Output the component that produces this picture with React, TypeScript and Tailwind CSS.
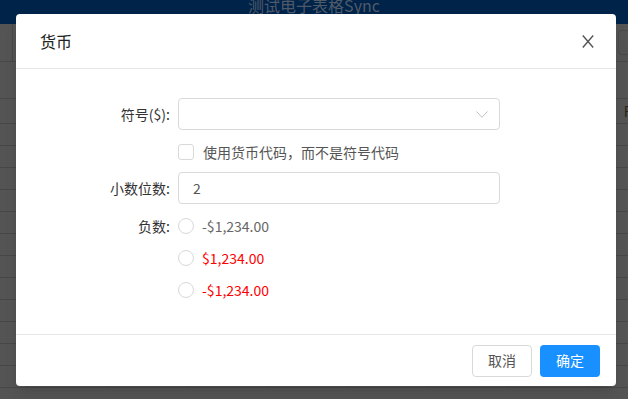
const rows = Array.from({ length: 13 });
const cols = ["", "", "", "", "", "", "", "F"];

function Sheet() {
  return (
    <div className="flex flex-col w-full h-full bg-[#545454]">
      <div className="h-[24px] bg-[#00234a] flex justify-center overflow-hidden shrink-0">
        <span className="text-[16px] leading-[16px] -mt-[3px] text-[#4f5a68]">测试电子表格Sync</span>
      </div>
      <div className="h-[38px] flex border-b border-[#484848] shrink-0">
        <div className="w-[13px] border-r border-[#484848]" />
        <div className="flex-1" />
        <div className="w-[10px] my-[6px] rounded-l-[4px] border border-r-0 border-[#4a4a4a]" />
      </div>
      <div className="h-[37px] border-b border-[#484848] shrink-0" />
      <div className="flex flex-col">
        {rows.map((_, i) => (
          <div key={i} className={`flex border-b border-[#474747] ${i === 0 ? "h-[25px]" : "h-[22px]"}`}>
            <div className="w-[28px] shrink-0 border-r border-[#474747]" />
            {cols.map((c, j) => (
              <div
                key={j}
                className="w-[80px] shrink-0 border-r border-[#474747] flex items-center justify-center text-[14px] text-[#2a2418]"
              >
                {i === 0 ? c : ""}
              </div>
            ))}
          </div>
        ))}
      </div>
    </div>
  );
}

function Radio({ text, color }: { text: string; color: string }) {
  return (
    <div className="flex items-center h-[16px]">
      <span className="w-[16px] h-[16px] rounded-full border border-[#d9d9d9] bg-white" />
      <span className={`ml-[8px] text-[14px] ${color}`}>{text}</span>
    </div>
  );
}

export default function App() {
  return (
    <div className="relative w-[628px] h-[399px] overflow-hidden font-['Noto_Sans_CJK_SC','Noto_Sans',sans-serif]">
      <Sheet />
      <div className="absolute left-[16px] top-[14px] w-[600px] h-[372px] bg-white rounded-[4px] flex flex-col shadow-lg">
        <div className="h-[55px] flex items-center justify-between pl-[24px] pr-[22px] border-b border-[#e8e8e8] shrink-0">
          <span className="text-[16px] text-[#222]">货币</span>
          <svg width="12" height="13" viewBox="0 0 12 13" className="mt-[1px]">
            <path d="M0.8 0.5 L11.2 12.5 M11.2 0.5 L0.8 12.5" stroke="#555" strokeWidth="1.4" fill="none" />
          </svg>
        </div>
        <div className="flex-1 pt-[29px] text-[14px]">
          <div className="flex items-center h-[32px]">
            <span className="w-[156px] text-right pr-[2px] text-[#333]">符号($):</span>
            <div className="ml-[6px] w-[322px] h-[32px] border border-[#d9d9d9] rounded-[4px] flex items-center justify-end pr-[11px]">
              <svg width="12" height="7" viewBox="0 0 12 7">
                <path d="M0.5 0.5 L6 6.3 L11.5 0.5" stroke="#c0c0c0" strokeWidth="1" fill="none" />
              </svg>
            </div>
          </div>
          <div className="flex items-center h-[16px] mt-[14px] pl-[162px]">
            <span className="w-[16px] h-[16px] rounded-[3px] border border-[#d9d9d9]" />
            <span className="ml-[9px] text-[#555]">使用货币代码，而不是符号代码</span>
          </div>
          <div className="flex items-center h-[32px] mt-[12px]">
            <span className="w-[156px] text-right pr-[2px] text-[#333]">小数位数:</span>
            <div className="ml-[6px] w-[322px] h-[32px] border border-[#d9d9d9] rounded-[4px] flex items-center pl-[14px] text-[#555]">
              2
            </div>
          </div>
          <div className="flex mt-[14px]">
            <span className="w-[156px] h-[16px] leading-[16px] text-right pr-[2px] text-[#333]">负数:</span>
            <div className="ml-[6px] flex flex-col gap-[16px]">
              <Radio text="-$1,234.00" color="text-[#666]" />
              <Radio text="$1,234.00" color="text-[#ff0000]" />
              <Radio text="-$1,234.00" color="text-[#ff0000]" />
            </div>
          </div>
        </div>
        <div className="h-[52px] border-t border-[#e8e8e8] flex items-center justify-end gap-[8px] pr-[16px] shrink-0">
          <button className="w-[60px] h-[32px] rounded-[4px] border border-[#d9d9d9] text-[14px] text-[#555] bg-white">取消</button>
          <button className="w-[60px] h-[32px] rounded-[4px] bg-[#1890ff] text-[14px] text-white">确定</button>
        </div>
      </div>
    </div>
  );
}
